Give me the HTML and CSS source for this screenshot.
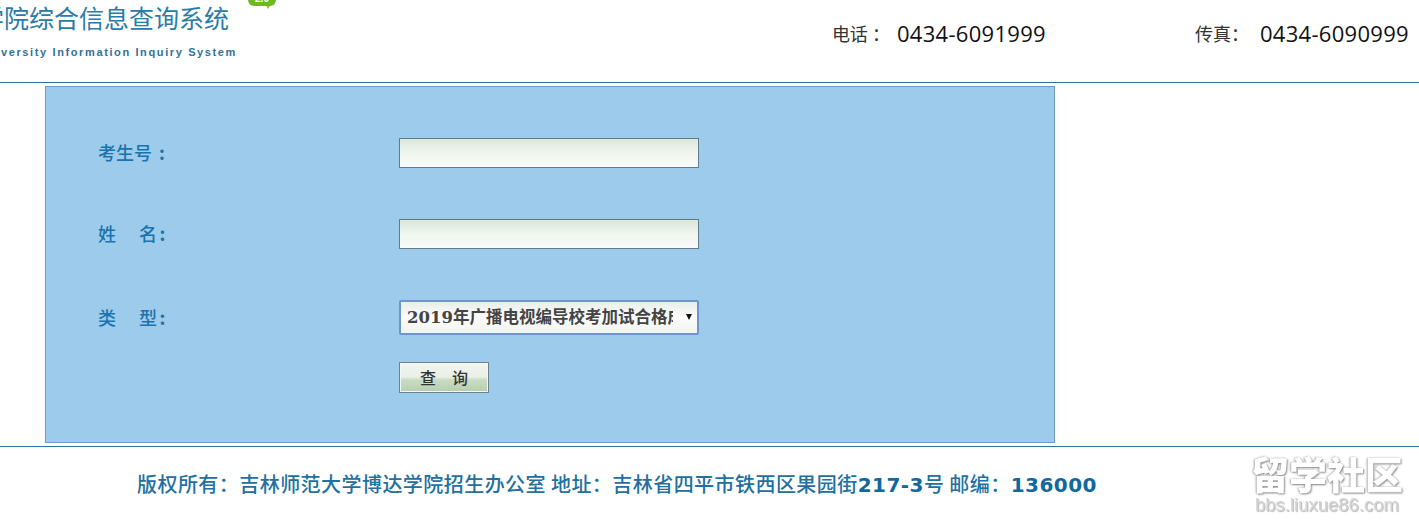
FILE: index.html
```html
<!DOCTYPE html>
<html>
<head>
  <meta charset="utf-8">
  <title>综合信息查询系统</title>
  <link rel="stylesheet" href="styles.css">
</head>
<body>
  <div class="header">
    <div class="logo">
      <div class="logo-title">学院综合信息查询系统</div>
      <div class="logo-sub">University Information Inquiry System</div>
      <span class="badge">2.0</span>
    </div>
    <div class="contact">
      <span class="contact-label">电话 ：</span><span class="contact-num">0434-6091999</span>
    </div>
    <div class="contact contact-fax">
      <span class="contact-label">传真：</span><span class="contact-num">0434-6090999</span>
    </div>
  </div>

  <form class="panel">
    <div class="form-row">
      <label class="field-label" for="ksh">考生号<b>:</b></label>
      <input class="input-field" type="text" id="ksh">
    </div>
    <div class="form-row">
      <label class="field-label wide" for="xm">姓　名<b>:</b></label>
      <input class="input-field" type="text" id="xm">
    </div>
    <div class="form-row form-row-select">
      <label class="field-label wide" for="lx">类　型<b>:</b></label>
      <div class="select-wrap">
        <select class="select-field" id="lx">
          <option>2019年广播电视编导校考加试合格成绩查询</option>
        </select>
      </div>
    </div>
    <div class="form-row form-row-btn">
      <button class="button" type="button">查　询</button>
    </div>
  </form>

  <div class="footer">
    版权所有：吉林师范大学博达学院招生办公室 地址：吉林省四平市铁西区果园街<b>217-3</b>号 邮编：<b>136000</b>
  </div>

  <div class="watermark">
    <div class="watermark-big">留学社区</div>
    <div class="watermark-url">bbs.liuxue86.com</div>
  </div>
</body>
</html>
```

FILE: styles.css
```css
:root {
  --cjk-font: "Noto Sans CJK SC", sans-serif;
  --num-font: "DejaVu Sans", "Noto Sans CJK SC", sans-serif;
  --line: #2b7896;
  --panel: #9ccbeb;
  --label-blue: #1a73ad;
}

html, body {
  height: 100%;
}

body {
  margin: 0;
  background: #ffffff;
  font-family: var(--cjk-font);
  overflow: hidden;
  position: relative;
}

/* top bar */
.header {
  display: flex;
  height: 82px;
  border-bottom: 1px solid var(--line);
  padding-right: 10px;
}

.logo {
  position: relative;
  width: 237px;
  display: flex;
  flex-direction: column;
  align-items: flex-end;
  flex-shrink: 0;
}

.logo-title {
  font-size: 25px;
  line-height: 34px;
  color: #2b7ba8;
  white-space: nowrap;
  padding-right: 8px;
}

.logo-sub {
  margin-top: 11px;
  font-family: "Liberation Sans", sans-serif;
  font-size: 11px;
  font-weight: 700;
  line-height: 14px;
  letter-spacing: 1.62px;
  color: #2f7398;
  white-space: nowrap;
}

.badge {
  position: absolute;
  left: 248px;
  top: -10px;
  width: 28px;
  height: 16px;
  border-radius: 6px;
  background: #6fb920;
  color: #ffffff;
  font-family: "Liberation Sans", sans-serif;
  font-size: 10px;
  font-weight: 700;
  line-height: 18px;
  text-align: center;
}

.badge:after {
  content: "";
  position: absolute;
  left: 18px;
  top: 16px;
  border-left: 2px solid transparent;
  border-right: 2px solid transparent;
  border-top: 3px solid #8cc850;
}

.contact {
  display: flex;
  align-items: center;
  height: 66px;
  margin-left: auto;
  color: #111111;
}

.contact-fax {
  margin-left: 149px;
}

.contact-label {
  font-size: 18px;
  color: #333333;
  width: 65px;
  white-space: pre;
}

.contact-num {
  font-family: "Open Sans", sans-serif;
  font-size: 22px;
  letter-spacing: 0.3px;
}

/* form panel */
.panel {
  box-sizing: border-box;
  width: 1010px;
  height: 357px;
  margin: 3px 0 3px 45px;
  padding: 51px 0 0 52px;
  background: var(--panel);
  border: 1px solid #6f9cc2;
}

.form-row {
  display: flex;
  align-items: center;
  margin-bottom: 51px;
}

.form-row-select {
  margin-bottom: 27px;
}

.form-row-btn {
  margin-bottom: 0;
  padding-left: 301px;
}

.field-label {
  width: 301px;
  flex-shrink: 0;
  font-size: 18px;
  font-weight: 500;
  color: var(--label-blue);
  line-height: 28px;
  padding-bottom: 2px;
}

.field-label b {
  margin-left: 7px;
}

.field-label.wide {
  letter-spacing: 2.5px;
}

.field-label.wide b {
  margin-left: 0;
}

.input-field {
  box-sizing: border-box;
  width: 300px;
  height: 30px;
  padding: 0 6px;
  border: 1px solid #66798c;
  background: linear-gradient(#dbe8da, #f0f5ef 50%, #f8fbf8);
}

.select-wrap {
  position: relative;
  height: 35px;
}

.select-wrap:after {
  content: "";
  position: absolute;
  right: 7px;
  top: 14px;
  border-left: 3px solid transparent;
  border-right: 3px solid transparent;
  border-top: 6px solid #111111;
  pointer-events: none;
}

.select-field {
  appearance: none;
  display: block;
  box-sizing: border-box;
  width: 300px;
  height: 35px;
  padding: 0 24px 0 6px;
  border: 2px solid #6f95cf;
  border-radius: 2px;
  background: linear-gradient(#e9efe9, #fbfcfb 50%, #f1f4ef);
  font-family: "DejaVu Serif", "Noto Sans CJK SC", serif;
  font-size: 16.5px;
  font-weight: 700;
  color: #444444;
}

.button {
  width: 90px;
  height: 31px;
  padding: 0 0 2px;
  border: 1px solid #6d8290;
  box-shadow: inset 0 0 0 1px #f4f7f2;
  background: linear-gradient(#f1f5ee, #e9f0e6 48%, #c9dcc2 58%, #b4cfad);
  font-family: var(--cjk-font);
  font-size: 16px;
  font-weight: 500;
  color: #333333;
  cursor: pointer;
}

/* bottom bar */
.footer {
  border-top: 1px solid var(--line);
  padding: 21px 0 0 137px;
  font-size: 20px;
  font-weight: 500;
  line-height: 32px;
  letter-spacing: 0.45px;
  color: #22709f;
  white-space: nowrap;
}

.footer b {
  font-family: var(--num-font);
  font-weight: 700;
  color: #10689f;
}

/* site stamp lying over the corner */
.watermark {
  position: absolute;
  right: 14px;
  top: 451px;
  width: 156px;
  text-align: center;
  color: #ffffff;
  pointer-events: none;
  filter: blur(0.6px);
}

.watermark-big {
  font-size: 38px;
  font-weight: 900;
  line-height: 44px;
  white-space: nowrap;
  text-shadow: 1px 1px 2px #8a8a8a, -1px 0 2px #aaaaaa;
}

.watermark-url {
  margin-top: 1px;
  font-family: "Liberation Sans", sans-serif;
  font-size: 18.5px;
  line-height: 17px;
  color: #d4d4d4;
  white-space: nowrap;
  text-shadow: 1px 1px 1px #b5b5b5;
}
```
